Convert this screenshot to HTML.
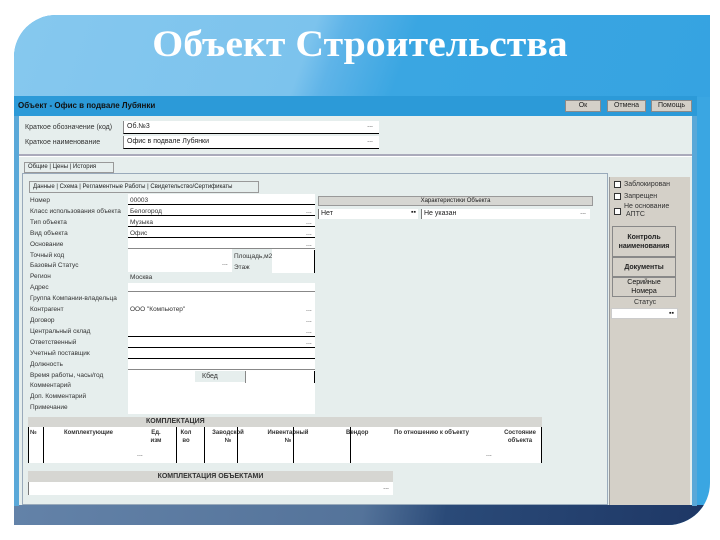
<!DOCTYPE html>
<html><head><meta charset="utf-8"><style>
*{margin:0;padding:0;box-sizing:border-box}
body{width:720px;height:540px;background:#fff;position:relative;overflow:hidden;font-family:"Liberation Sans",sans-serif;font-size:7px;color:#222}
.a{position:absolute}
.w{position:absolute;background:#fff}
.g{position:absolute;background:#d6d6d2}
.l{position:absolute;font-size:7px;white-space:nowrap;color:#333}
.d{position:absolute;font-size:7px}
.btn{position:absolute;background:#d4d0c8;border:1px solid #8a8a8a;text-align:center;font-size:7px;line-height:10px}
.cb{position:absolute;width:7px;height:7px;border:1px solid #333;background:#fff}
.rb{position:absolute;background:#d4d0c8;border:1px solid #888;text-align:center;font-weight:bold;font-size:7px;line-height:9px;color:#222}
.th{position:absolute;top:2px;text-align:center;font-size:6px;line-height:8px}
</style></head><body>
<div class="a" style="left:14px;top:15px;width:696px;height:510px;border-radius:42px 0 42px 0;overflow:hidden;background:#3aa6e2">
 <div class="a" style="left:0;top:0;width:696px;height:82px;background:linear-gradient(110deg,#86c8ee 0%,#7cc3ed 42%,#5fb4e8 46%,#3aa6e2 56%,#36a3e1 100%)"></div>
 <div class="a" style="left:0;top:490px;width:696px;height:20px;background:linear-gradient(100deg,#6382a8 0%,#54739a 50%,#2a4a78 62%,#1e3765 100%)"></div>
</div>
<div class="a" style="left:0;top:25px;width:720px;text-align:center;color:#fff;font-family:'Liberation Serif',serif;font-weight:bold;font-size:34px;line-height:40px;transform:scale(1.17,1.08)">Объект Строительства</div>
<div class="a" style="left:14px;top:96px;width:683px;height:20px;background:#2c9ad8"></div>
<div class="a" style="left:18px;top:101px;font-size:8px;font-weight:bold;color:#111">Объект - Офис в подвале Лубянки</div>
<div class="btn" style="left:565px;top:100px;width:36px;height:12px">Ок</div>
<div class="btn" style="left:607px;top:100px;width:39px;height:12px">Отмена</div>
<div class="btn" style="left:651px;top:100px;width:41px;height:12px">Помощь</div>
<div class="a" style="left:14px;top:116px;width:5px;height:390px;background:#5aa8d8"></div>
<div class="a" style="left:692px;top:116px;width:5px;height:390px;background:#5aa8d8"></div>
<div class="a" style="left:19px;top:116px;width:673px;height:389px;background:#e6eeed"></div>
<div class="l" style="left:25px;top:124px">Краткое обозначение (код)</div>
<div class="w" style="left:123px;top:121px;width:256px;height:13px;border-bottom:1px solid #000;border-left:1px solid #888"><span class="d" style="left:3px;top:2px">Об.№3</span><span class="d" style="right:6px;top:1px">...</span></div>
<div class="l" style="left:25px;top:139px">Краткое наименование</div>
<div class="w" style="left:123px;top:136px;width:256px;height:13px;border-bottom:1px solid #000;border-left:1px solid #888"><span class="d" style="left:3px;top:2px">Офис в подвале Лубянки</span><span class="d" style="right:6px;top:1px">...</span></div>
<div class="a" style="left:19px;top:154px;width:673px;height:2px;background:#aab"></div>
<div class="a" style="left:19px;top:156px;width:673px;height:1px;background:#fff"></div>
<div class="a" style="left:24px;top:162px;width:90px;height:11px;background:#e6eeed;border:1px solid #999;font-size:6px;line-height:9px;padding-left:3px">Общие | Цены | История</div>
<div class="a" style="left:22px;top:173px;width:586px;height:332px;border:1px solid #9ab;background:#e6eeed"></div>
<div class="a" style="left:29px;top:181px;width:230px;height:12px;border:1px solid #999;font-size:6px;line-height:10px;padding-left:3px;white-space:nowrap">Данные | Схема | Регламентные Работы | Свидетельство/Сертификаты</div>
<div class="w" style="left:128px;top:194px;width:187px;height:220px"></div>
<div class="a" style="left:28px;top:194px;width:100px;height:220px;background:#e6eeed"></div>
<div class="l" style="left:30px;top:196px;line-height:10.9px;font-size:6.5px">Номер<br>Класс использования объекта<br>Тип объекта<br>Вид объекта<br>Основание<br>Точный код<br>Базовый Статус<br>Регион<br>Адрес<br>Группа Компании-владельца<br>Контрагент<br>Договор<br>Центральный склад<br>Ответственный<br>Учетный поставщик<br>Должность<br>Время работы, часы/год<br>Комментарий<br>Доп. Комментарий<br>Примечание</div>
<div class="l" style="left:130px;top:196px;line-height:10.9px;font-size:6.5px">00003<br>Белогород<br>Музыка<br>Офис<br><br><br><br>Москва<br><br><br>ООО "Компьютер"</div>
<div class="a" style="left:128px;top:204px;width:187px;height:1px;background:#000;box-shadow:0 11px #000,0 22px #000,0 33px #000,0 44px #888,0 87px #888,0 132px #000,0 143px #000,0 154px #000,0 165px #888"></div>
<div class="l" style="left:306px;top:207px;line-height:10.9px">...<br>...<br>...<br>...</div>
<div class="l" style="left:306px;top:305px;line-height:10.9px">...<br>...<br>...<br>...</div>
<div class="a" style="left:128px;top:272px;width:187px;height:11px;background:#e6eeed"></div>
<div class="l" style="left:130px;top:274px;font-size:6.5px">Москва</div>
<div class="a" style="left:232px;top:249px;width:40px;height:24px;background:#e6eeed"></div>
<div class="l" style="left:234px;top:251px;line-height:11px;font-size:6.5px">Площадь,м2<br>Этаж</div>
<div class="l" style="left:222px;top:260px">...</div>
<div class="a" style="left:272px;top:250px;width:43px;height:23px;background:#fff;border-right:1px solid #000"></div>
<div class="a" style="left:195px;top:371px;width:50px;height:11px;background:#e6eeed"></div>
<div class="l" style="left:202px;top:373px">Кбед</div>
<div class="a" style="left:245px;top:371px;width:70px;height:12px;background:#fff;border-left:1px solid #888;border-right:1px solid #000"></div>
<div class="g" style="left:318px;top:196px;width:275px;height:10px;border:1px solid #999;text-align:center;font-size:6px;line-height:8px">Характеристики Объекта</div>
<div class="w" style="left:318px;top:209px;width:100px;height:10px;border-left:1px solid #777"><span class="d" style="left:2px;top:1px">Нет</span><span class="d" style="right:2px;top:0">▪▪</span></div>
<div class="w" style="left:421px;top:209px;width:169px;height:10px;border-left:1px solid #777"><span class="d" style="left:2px;top:1px">Не указан</span><span class="d" style="right:4px;top:0">...</span></div>
<div class="g" style="left:28px;top:417px;width:514px;height:10px;padding-left:118px;font-size:7px;font-weight:bold;line-height:10px;color:#333">КОМПЛЕКТАЦИЯ</div>
<div class="w" style="left:28px;top:427px;width:514px;height:36px;border-left:1px solid #000;border-right:1px solid #000"></div>
<div class="a" style="left:28px;top:427px;width:514px;height:23px;font-weight:bold;color:#333">
 <span class="th" style="left:2px">№</span>
 <span class="th" style="left:36px">Комплектующие</span>
 <span class="th" style="left:116px;width:24px">Ед.<br>изм</span>
 <span class="th" style="left:145px;width:26px">Кол<br>во</span>
 <span class="th" style="left:175px;width:50px">Заводской<br>№</span>
 <span class="th" style="left:231px;width:58px">Инвентарный<br>№</span>
 <span class="th" style="left:318px">Вендор</span>
 <span class="th" style="left:366px">По отношению к объекту</span>
 <span class="th" style="left:470px;width:44px">Состояние<br>объекта</span>
</div>
<div class="a" style="left:43px;top:427px;width:1px;height:36px;background:#000;box-shadow:133px 0 #000,161px 0 #000,194px 0 #000,250px 0 #000,307px 0 #000"></div>
<div class="l" style="left:137px;top:451px">...</div>
<div class="l" style="left:486px;top:451px">...</div>
<div class="g" style="left:28px;top:471px;width:365px;height:11px;text-align:center;font-size:7px;font-weight:bold;line-height:11px;color:#333">КОМПЛЕКТАЦИЯ ОБЪЕКТАМИ</div>
<div class="w" style="left:28px;top:482px;width:365px;height:13px;border-left:1px solid #777"><span class="d" style="right:4px;top:2px">...</span></div>
<div class="a" style="left:609px;top:177px;width:81px;height:328px;background:#d4d0c8;border-left:1px solid #999"></div>
<div class="cb" style="left:614px;top:181px"></div><div class="l" style="left:624px;top:181px">Заблокирован</div>
<div class="cb" style="left:614px;top:193px"></div><div class="l" style="left:624px;top:193px">Запрещен</div>
<div class="cb" style="left:614px;top:208px"></div><div class="l" style="left:624px;top:203px;line-height:8px">Не основание<br>&nbsp;АПТС</div>
<div class="rb" style="left:612px;top:226px;width:64px;height:31px;padding-top:6px">Контроль<br>наименования</div>
<div class="rb" style="left:612px;top:257px;width:64px;height:20px;padding-top:5px">Документы</div>
<div class="rb" style="left:612px;top:277px;width:64px;height:20px;font-weight:normal;color:#111">Серийные<br>Номера</div>
<div class="l" style="left:634px;top:299px">Статус</div>
<div class="w" style="left:611px;top:308px;width:67px;height:11px;border:1px solid #ccc"><span class="d" style="right:3px;top:1px">▪▪</span></div>
</body></html>
